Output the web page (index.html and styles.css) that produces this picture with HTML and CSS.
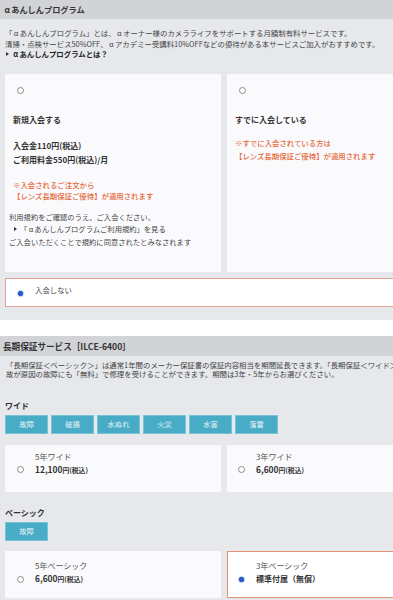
FILE: index.html
```html
<!DOCTYPE html>
<html lang="ja">
<head>
<meta charset="utf-8">
<title>αあんしんプログラム</title>
<link rel="stylesheet" href="styles.css">
</head>
<body>
<div class="page">
  <section class="sec sec--anshin">
    <h2 class="sec-head"><span class="alpha">α</span>あんしんプログラム</h2>
    <div class="sec-body">
      <p class="intro">「<span class="alpha">α</span>あんしんプログラム」とは、<span class="alpha">α</span>オーナー様のカメラライフをサポートする月額制有料サービスです。<br>清掃・点検サービス50%OFF、<span class="alpha">α</span>アカデミー受講料10%OFFなどの優待がある本サービスご加入がおすすめです。<br><span class="more"><span class="tri"></span><span class="alpha">α</span>あんしんプログラムとは？</span></p>
      <div class="cards cards--tall">
        <div class="card card--tall">
          <span class="radio"></span>
          <p class="card-title">新規入会する</p>
          <p class="fee">入会金110円(税込)<br>ご利用料金550円(税込)/月</p>
          <p class="note">※入会されるご注文から<br>【レンズ長期保証ご優待】が適用されます</p>
          <p class="terms">利用規約をご確認のうえ、ご入会ください。<br><span class="terms-link"><span class="tri"></span>「<span class="alpha">α</span>あんしんプログラムご利用規約」を見る</span><br>ご入会いただくことで規約に同意されたとみなされます</p>
        </div>
        <div class="card card--tall">
          <span class="radio"></span>
          <p class="card-title">すでに入会している</p>
          <p class="note note--member">※すでに入会されている方は<br>【レンズ長期保証ご優待】が適用されます</p>
        </div>
      </div>
      <div class="decline">
        <span class="radio radio--on"></span>
        <span class="decline-text">入会しない</span>
      </div>
    </div>
  </section>

  <section class="sec sec--warranty">
    <h2 class="sec-head sec-head--tall">長期保証サービス［ILCE-6400］</h2>
    <div class="sec-body sec-body--warranty">
      <p class="intro intro--warranty">「長期保証＜ベーシック＞」は通常1年間のメーカー保証書の保証内容相当を期間延長できます。「長期保証＜ワイド＞」は事<br>故が原因の故障にも「無料」で修理を受けることができます。期間は3年・5年からお選びください。</p>

      <h3 class="plan-head">ワイド</h3>
      <ul class="tags">
        <li class="tag">故障</li>
        <li class="tag">破損</li>
        <li class="tag">水ぬれ</li>
        <li class="tag">火災</li>
        <li class="tag">水害</li>
        <li class="tag">落雷</li>
      </ul>
      <div class="cards cards--plan">
        <div class="card card--plan card--wide">
          <span class="radio"></span>
          <div class="plan-text">
            <p class="plan-name">5年ワイド</p>
            <p class="plan-price"><span class="num">12,100</span><span class="unit">円(税込)</span></p>
          </div>
        </div>
        <div class="card card--plan card--wide card--right">
          <span class="radio"></span>
          <div class="plan-text">
            <p class="plan-name">3年ワイド</p>
            <p class="plan-price"><span class="num">6,600</span><span class="unit">円(税込)</span></p>
          </div>
        </div>
      </div>

      <h3 class="plan-head plan-head--basic">ベーシック</h3>
      <ul class="tags">
        <li class="tag">故障</li>
      </ul>
      <div class="cards cards--plan cards--basic">
        <div class="card card--plan card--basic">
          <span class="radio"></span>
          <div class="plan-text">
            <p class="plan-name">5年ベーシック</p>
            <p class="plan-price"><span class="num">6,600</span><span class="unit">円(税込)</span></p>
          </div>
        </div>
        <div class="card card--plan card--basic card--selected">
          <span class="radio radio--on"></span>
          <div class="plan-text">
            <p class="plan-name">3年ベーシック</p>
            <p class="plan-price">標準付属（無償）</p>
          </div>
        </div>
      </div>
    </div>
  </section>
</div>
</body>
</html>
```

FILE: styles.css
```css
html, body {
  margin: 0;
  padding: 0;
  background: #ffffff;
  overflow-x: hidden;
}

body {
  font-family: "Noto Sans CJK JP", "Noto Sans", sans-serif;
  color: #333333;
}

p, h2, h3, ul {
  margin: 0;
  padding: 0;
}

.page {
  width: 448px;
}

.alpha {
  display: inline-block;
  width: 1em;
  text-align: center;
}

.sec-head {
  height: 19px;
  line-height: 19px;
  padding-left: 3px;
  background: #d2d3d6;
  font-size: 8.2px;
  font-weight: 700;
  color: #333333;
}

.sec-head--tall {
  height: 20px;
  line-height: 20px;
  padding-left: 3px;
  font-size: 8.6px;
}

.sec-body {
  background: #e6e8eb;
  padding: 9px 5px 13px;
}

.sec--warranty {
  margin-top: 16px;
}

.sec-body--warranty {
  padding-top: 4px;
  padding-bottom: 10px;
}

.intro {
  font-size: 7.4px;
  line-height: 10.5px;
  color: #444444;
  white-space: nowrap;
}

.intro--warranty {
  line-height: 9.8px;
  padding-left: 1px;
}

.more {
  font-weight: 700;
  color: #222222;
}

.tri {
  display: inline-block;
  width: 0;
  height: 0;
  border-top: 2px solid transparent;
  border-bottom: 2px solid transparent;
  border-left: 3px solid #333333;
  margin: 0 3px 0 1px;
  vertical-align: 1px;
}

.cards {
  display: grid;
  grid-template-columns: 216px 216px;
  column-gap: 6px;
  margin-top: 14px;
}

.cards--plan {
  margin-top: 11px;
}

.cards--basic {
  margin-top: 10px;
}

.card {
  background: #fafafc;
  box-sizing: border-box;
}

.card--tall {
  height: 198px;
  padding: 13px 8px 0;
}

.radio {
  display: block;
  box-sizing: border-box;
  width: 7px;
  height: 7px;
  border-radius: 50%;
  border: 1px solid #8c8c8c;
  background: #ffffff;
  flex: none;
}

.card--tall .radio {
  margin-left: 4px;
}

.radio--on {
  border: none;
  background: radial-gradient(circle, #2a5bc6 0 2.4px, #c3d1ef 2.9px);
}

.card-title {
  margin-top: 20px;
  font-size: 8px;
  line-height: 12px;
  font-weight: 700;
  color: #333333;
}

.fee {
  margin-top: 13.5px;
  font-size: 8px;
  line-height: 14px;
  font-weight: 700;
  color: #333333;
}

.note {
  margin-top: 11.5px;
  font-size: 7.4px;
  line-height: 11.5px;
  color: #e6693c;
  font-weight: 500;
}

.note--member {
  margin-top: 10.5px;
  line-height: 13.4px;
}

.terms {
  margin: 9px 0 0 -4px;
  font-size: 7.3px;
  line-height: 12.5px;
  color: #444444;
  white-space: nowrap;
}

.terms-link .tri {
  margin-left: 5px;
  margin-right: 3px;
}

.decline {
  margin-top: 6px;
  width: 438px;
  height: 29px;
  box-sizing: border-box;
  border: 1px solid #e2a393;
  background: #ffffff;
  display: flex;
  align-items: flex-start;
  padding: 5px 0 0 11px;
}

.decline .radio {
  margin-top: 6px;
}

.decline-text {
  margin-left: 11px;
  font-size: 7.4px;
  line-height: 12px;
  color: #444444;
}

.plan-head {
  margin-top: 21px;
  font-size: 8px;
  line-height: 12px;
  font-weight: 700;
  color: #333333;
}

.plan-head--basic {
  margin-top: 15px;
}

.tags {
  list-style: none;
  display: flex;
  gap: 3px;
  margin-top: 3px;
}

.tag {
  width: 43px;
  height: 19px;
  box-sizing: border-box;
  border: 1px solid #78c3d6;
  background: #49acc6;
  color: #e4f3f8;
  font-size: 7.3px;
  line-height: 17px;
  text-align: center;
}

.card--plan {
  display: flex;
  align-items: flex-start;
  height: 47px;
  padding: 5px 0 0 12px;
}

.card--right {
  padding-left: 11px;
}

.card--plan .radio {
  margin-top: 16px;
}

.plan-text {
  margin-left: 11px;
}

.plan-name {
  font-size: 8px;
  line-height: 13px;
  color: #555555;
}

.plan-price {
  font-size: 8px;
  line-height: 13px;
  font-weight: 700;
  color: #333333;
}

.plan-price .num {
  font-size: 8.4px;
}

.plan-price .unit {
  font-size: 6.8px;
}

.card--basic {
  padding-top: 8px;
}

.card--basic .radio {
  margin-top: 17px;
}

.card--selected {
  background: #ffffff;
  border: 1px solid #e39077;
  padding-left: 10px;
  padding-top: 7px;
}
```
